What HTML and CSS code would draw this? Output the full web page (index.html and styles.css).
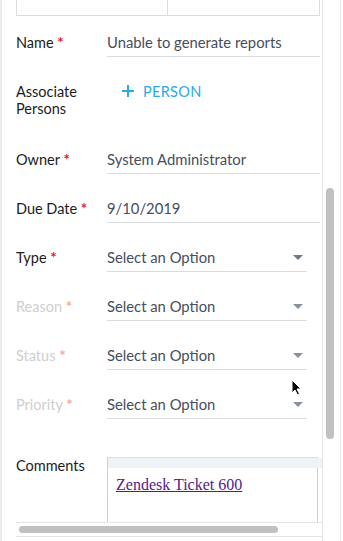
FILE: index.html
```html
<!DOCTYPE html>
<html>
<head>
<meta charset="utf-8">
<link rel="stylesheet" href="styles.css">
</head>
<body>
<div class="frame">
  <div class="pane">
    <div class="scroll">
      <div class="content">
        <div class="toptable"><div class="cell"></div><div class="cell"></div></div>

        <div class="row">
          <div class="label">Name <span class="req">*</span></div>
          <div class="field text">Unable to generate reports</div>
        </div>

        <div class="row assoc">
          <div class="label two">Associate<br>Persons</div>
          <div class="addbtn">
            <svg width="12" height="12" viewBox="0 0 12 12"><path d="M6 0v12M0 6h12" stroke="#29abe2" stroke-width="2"/></svg>
            <span>PERSON</span>
          </div>
        </div>

        <div class="row">
          <div class="label">Owner <span class="req">*</span></div>
          <div class="field text">System Administrator</div>
        </div>

        <div class="row">
          <div class="label">Due Date <span class="req">*</span></div>
          <div class="field text">9/10/2019</div>
        </div>

        <div class="row">
          <div class="label">Type <span class="req">*</span></div>
          <div class="field select">Select an Option<span class="caret"></span></div>
        </div>

        <div class="row disabled">
          <div class="label">Reason <span class="req">*</span></div>
          <div class="field select">Select an Option<span class="caret"></span></div>
        </div>

        <div class="row disabled">
          <div class="label">Status <span class="req">*</span></div>
          <div class="field select">Select an Option<span class="caret"></span></div>
        </div>

        <div class="row disabled">
          <div class="label">Priority <span class="req">*</span></div>
          <div class="field select">Select an Option<span class="caret"></span></div>
        </div>

        <div class="row comments">
          <div class="label">Comments</div>
          <div class="combox">
            <div class="band"></div>
            <a class="ticket" href="#">Zendesk Ticket 600</a>
          </div>
        </div>
      </div>
    </div>
    <div class="hbar"><div class="hthumb"></div></div>
  </div>
  <div class="vbar"><div class="vthumb"></div></div>
</div>
<svg class="cursor" width="11" height="17" viewBox="0 0 11 17"><path d="M1 1v13l3-3 2.5 5 2-1-2.5-5H10z" fill="#000" stroke="#fff" stroke-width="1"/></svg>
</body>
</html>
```

FILE: styles.css
```css
html, body {
  margin: 0;
  padding: 0;
  background: #fff;
}
body {
  font-family: Lato, "Open Sans", sans-serif;
  font-size: 15px;
  color: #1c1c1c;
  position: relative;
  width: 343px;
  height: 541px;
  overflow: hidden;
}
.frame {
  display: flex;
  height: 541px;
  width: 337px;
  border-left: 2px solid #ececec;
  box-sizing: border-box;
}
.pane {
  width: 320px;
  border-right: 1px solid #e6e6e6;
  display: flex;
  flex-direction: column;
  flex: none;
}
.scroll {
  height: 522px;
  overflow: hidden;
  padding-left: 14px;
  box-sizing: border-box;
  flex: none;
}
.content {
  width: 304px;
}
.toptable {
  display: flex;
  height: 15px;
  border: 1px solid #dcdcdc;
  border-top: none;
}
.cell {
  flex: none;
  width: 150px;
  border-right: 1px solid #dcdcdc;
}
.cell + .cell {
  flex: 1;
  border-right: none;
}
.row {
  display: flex;
  margin-top: 20px;
}
.toptable + .row {
  margin-top: 12px;
}
.label {
  width: 91px;
  flex: none;
  line-height: 28px;
  font-size: 14.5px;
  color: #1c1c1c;
}
.label.two {
  line-height: 17px;
  padding-top: 6px;
}
.req {
  color: #e02424;
  font-weight: 700;
  font-size: 15px;
}
.field {
  height: 28px;
  line-height: 28px;
  border-bottom: 1px solid #d9dde2;
  color: #464e5c;
  font-size: 14.8px;
  white-space: nowrap;
}
.field.text {
  width: 213px;
}
.field.select {
  width: 200px;
  display: flex;
  justify-content: space-between;
  align-items: center;
}
.caret {
  width: 0;
  height: 0;
  border-left: 5px solid transparent;
  border-right: 5px solid transparent;
  border-top: 5px solid #6f7886;
  margin-right: 4px;
  margin-top: 1px;
}
.disabled .label {
  color: #cfcfcf;
}
.disabled .req {
  color: #f6a6a6;
}
.disabled .caret {
  border-top-color: #8a929e;
}
.assoc {
  height: 48px;
}
.addbtn {
  height: 28px;
  display: flex;
  align-items: center;
  gap: 9px;
  padding-left: 15px;
  color: #29abe2;
  font-size: 14.5px;
  letter-spacing: 0.3px;
}
.addbtn svg {
  display: block;
}
.comments {
  margin-top: 38px;
}
.comments .label {
  line-height: 17px;
}
.combox {
  width: 209px;
  height: 120px;
  border: 1px solid #d0d0d0;
  border-top-color: #dedede;
  flex: none;
}
.band {
  height: 10px;
  width: 215px;
  background: #f0f3f6;
}
.ticket {
  display: block;
  margin: 8px 0 0 8px;
  font-family: "Liberation Serif", serif;
  font-size: 16px;
  line-height: 18px;
  color: #551a8b;
  text-decoration: underline;
  white-space: nowrap;
}
.hbar {
  margin-left: 14px;
  border-top: 1px solid #e6e6e6;
  border-bottom: 1px solid #e6e6e6;
  padding: 3px 0 0 3px;
  box-sizing: border-box;
  height: 15px;
}
.hthumb {
  width: 259px;
  height: 7px;
  border-radius: 4px;
  background: #c1c1c1;
}
.vbar {
  width: 14px;
  flex: none;
  border-right: 1px solid #e6e6e6;
  padding: 188px 0 0 3px;
  box-sizing: content-box;
}
.vthumb {
  width: 8px;
  height: 251px;
  border-radius: 4px;
  background: #c1c1c1;
}
.cursor {
  position: absolute;
  left: 291px;
  top: 379px;
}
```
